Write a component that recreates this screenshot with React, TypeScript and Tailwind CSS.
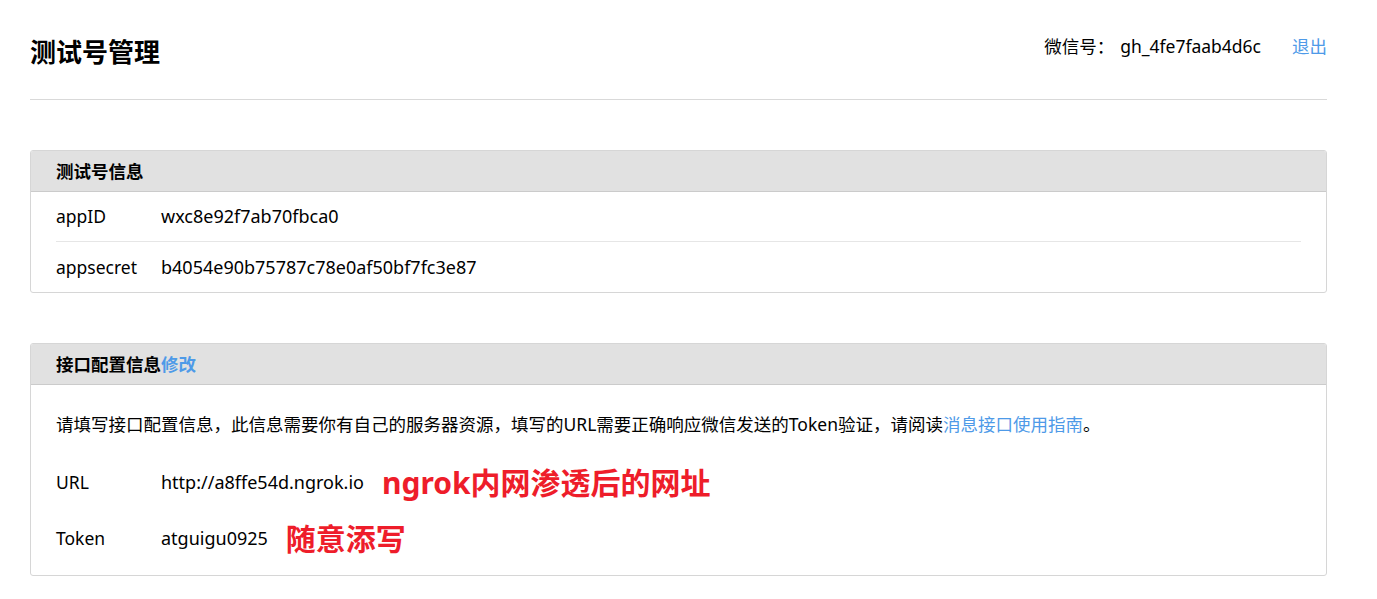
import React from "react";

const font = { fontFamily: '"Noto Sans", "Noto Sans CJK SC", sans-serif' };

export default function App() {
  return (
    <div className="min-h-screen bg-white text-[#222]" style={font}>
      <div className="ml-[30px] w-[1297px]">
        <div className="flex h-[100px] items-start justify-between border-b border-[#d9d9d9] pt-[34px]">
          <h1 className="text-[26px] font-bold leading-[36px] text-black">测试号管理</h1>
          <div className="flex items-center text-[17.5px] leading-[24px]">
            <span className="text-black">微信号：</span>
            <span className="ml-[6px] text-black">gh_4fe7faab4d6c</span>
            <a className="ml-[31px] text-[#4e9ae8]">退出</a>
          </div>
        </div>

        <div className="mt-[50px] overflow-hidden rounded-[3px] border border-[#d6d6d6]">
          <div className="flex h-[41px] items-center border-b border-[#cbcbcb] bg-[#e1e1e1] px-[25px] text-[17.5px] font-bold text-black">
            测试号信息
          </div>
          <div className="px-[25px] text-[17.5px] text-black">
            <div className="flex h-[50px] items-center border-b border-[#e6e6e6]">
              <span className="w-[105px]">appID</span>
              <span className="text-[18px]">wxc8e92f7ab70fbca0</span>
            </div>
            <div className="flex h-[50px] items-center">
              <span className="w-[105px]">appsecret</span>
              <span className="text-[18px]">b4054e90b75787c78e0af50bf7fc3e87</span>
            </div>
          </div>
        </div>

        <div className="mt-[50px] overflow-hidden rounded-[3px] border border-[#d6d6d6]">
          <div className="flex h-[41px] items-center border-b border-[#cbcbcb] bg-[#e1e1e1] px-[25px] text-[17.5px] font-bold text-black">
            接口配置信息<span className="text-[#4e9ae8]">修改</span>
          </div>
          <div className="px-[25px] pb-[9px] pt-[26px] text-[17.5px] text-black">
            <p className="leading-[26px] text-[17.5px]">
              请填写接口配置信息，此信息需要你有自己的服务器资源，填写的URL需要正确响应微信发送的Token验证，请阅读
              <a className="text-[#4e9ae8]">消息接口使用指南</a>。
            </p>
            <div className="mt-[17px] flex h-[56px] items-center">
              <span className="w-[105px]">URL</span>
              <span className="text-[18px]">http://a8ffe54d.ngrok.io</span>
              <span className="ml-[18px] text-[30px] font-bold text-[#ee1d2a]">ngrok内网渗透后的网址</span>
            </div>
            <div className="flex h-[56px] items-center">
              <span className="w-[105px]">Token</span>
              <span className="text-[18px]">atguigu0925</span>
              <span className="ml-[18px] text-[30px] font-bold text-[#ee1d2a]">随意添写</span>
            </div>
          </div>
        </div>
      </div>
    </div>
  );
}
